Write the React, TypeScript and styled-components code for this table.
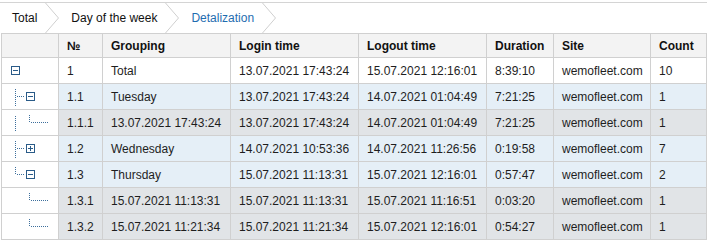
import React from "react";
import styled, { createGlobalStyle } from "styled-components";

const GlobalStyle = createGlobalStyle`
  body {
    margin: 0;
    background: #fff;
    font-family: "Liberation Sans", Arial, sans-serif;
    font-size: 12px;
    color: #1e1e1e;
  }
`;

const Page = styled.div`
  width: 707px;
  padding-top: 2px;
`;

const Breadcrumbs = styled.div`
  display: flex;
  align-items: stretch;
  height: 30px;
  border-top: 1px solid #d4d4d4;
  background: #fff;
`;

const Crumb = styled.div<{ $active?: boolean; $first?: boolean }>`
  display: flex;
  align-items: center;
  padding-left: ${(p) => (p.$first ? 12 : 12)}px;
  color: ${(p) => (p.$active ? "#1f6db0" : "#111")};
  white-space: nowrap;
`;

const CrumbLabel = styled.span`
  padding-right: 8px;
  padding-bottom: 1px;
`;

const Chevron = styled.svg`
  display: block;
  flex: none;
`;

const TableWrap = styled.div`
  padding-left: 1px;
`;

const Grid = styled.table`
  width: 705px;
  table-layout: fixed;
  border-collapse: collapse;
`;

const HeadCell = styled.th`
  height: 23px;
  padding: 0 0 0 8px;
  text-align: left;
  font-weight: bold;
  color: #111;
  background: #f3f3f3;
  border: 1px solid #d0d0d0;
  white-space: nowrap;
  overflow: hidden;
`;

type Tone = "plain" | "blue" | "gray";

const toneColor: Record<Tone, string> = {
  plain: "#fff",
  blue: "#e5eff7",
  gray: "#e1e4e7",
};

const Cell = styled.td<{ $tone: Tone }>`
  height: 24.67px;
  padding: 0 0 0 8px;
  background: ${(p) => toneColor[p.$tone]};
  border: 1px solid #d0d0d0;
  white-space: nowrap;
  overflow: hidden;
`;

const TreeCell = styled.td`
  height: 24.67px;
  padding: 0;
  background: #fff;
  border: 1px solid #d0d0d0;
`;

const TreeSvg = styled.svg`
  display: block;
`;

const LINE = "#3d6f9c";
const BOX = "#2a5b88";

type TreeInfo = {
  level: 0 | 1 | 2;
  toggle?: "minus" | "plus";
  last?: boolean;
  outerContinues?: boolean;
};

const Dots = ({ x1, y1, x2, y2 }: { x1: number; y1: number; x2: number; y2: number }) => (
  <line x1={x1} y1={y1} x2={x2} y2={y2} stroke={LINE} strokeWidth={1} strokeDasharray="1 1" />
);

const Toggle = ({ x, kind }: { x: number; kind: "minus" | "plus" }) => (
  <g>
    <rect x={x + 0.5} y={8.5} width={8} height={8} fill="#fff" stroke={BOX} strokeWidth={1} />
    <line x1={x + 2} y1={12.5} x2={x + 7} y2={12.5} stroke={BOX} strokeWidth={1} />
    {kind === "plus" && <line x1={x + 4.5} y1={10} x2={x + 4.5} y2={15} stroke={BOX} strokeWidth={1} />}
  </g>
);

const TreeGuide = ({ info }: { info: TreeInfo }) => {
  const { level, toggle, last, outerContinues } = info;
  return (
    <TreeSvg width={55} height={25} viewBox="0 0 55 25">
      {level === 0 && toggle && <Toggle x={9} kind={toggle} />}
      {level === 1 && (
        <>
          <Dots x1={13.5} y1={5} x2={13.5} y2={last ? 12 : 22} />
          <Dots x1={15} y1={12.5} x2={23} y2={12.5} />
          {toggle && <Toggle x={24} kind={toggle} />}
        </>
      )}
      {level === 2 && (
        <>
          {outerContinues && <Dots x1={13.5} y1={6} x2={13.5} y2={22} />}
          <Dots x1={27.5} y1={5} x2={27.5} y2={12} />
          <Dots x1={29} y1={12.5} x2={47} y2={12.5} />
        </>
      )}
    </TreeSvg>
  );
};

type Row = {
  tree: TreeInfo;
  tone: Tone;
  no: string;
  grouping: string;
  login: string;
  logout: string;
  duration: string;
  site: string;
  count: string;
};

const rows: Row[] = [
  { tree: { level: 0, toggle: "minus" }, tone: "plain", no: "1", grouping: "Total", login: "13.07.2021 17:43:24", logout: "15.07.2021 12:16:01", duration: "8:39:10", site: "wemofleet.com", count: "10" },
  { tree: { level: 1, toggle: "minus" }, tone: "blue", no: "1.1", grouping: "Tuesday", login: "13.07.2021 17:43:24", logout: "14.07.2021 01:04:49", duration: "7:21:25", site: "wemofleet.com", count: "1" },
  { tree: { level: 2, last: true, outerContinues: true }, tone: "gray", no: "1.1.1", grouping: "13.07.2021 17:43:24", login: "13.07.2021 17:43:24", logout: "14.07.2021 01:04:49", duration: "7:21:25", site: "wemofleet.com", count: "1" },
  { tree: { level: 1, toggle: "plus" }, tone: "blue", no: "1.2", grouping: "Wednesday", login: "14.07.2021 10:53:36", logout: "14.07.2021 11:26:56", duration: "0:19:58", site: "wemofleet.com", count: "7" },
  { tree: { level: 1, toggle: "minus", last: true }, tone: "blue", no: "1.3", grouping: "Thursday", login: "15.07.2021 11:13:31", logout: "15.07.2021 12:16:01", duration: "0:57:47", site: "wemofleet.com", count: "2" },
  { tree: { level: 2 }, tone: "gray", no: "1.3.1", grouping: "15.07.2021 11:13:31", login: "15.07.2021 11:13:31", logout: "15.07.2021 11:16:51", duration: "0:03:20", site: "wemofleet.com", count: "1" },
  { tree: { level: 2, last: true }, tone: "gray", no: "1.3.2", grouping: "15.07.2021 11:21:34", login: "15.07.2021 11:21:34", logout: "15.07.2021 12:16:01", duration: "0:54:27", site: "wemofleet.com", count: "1" },
];

const columns = [
  { title: "", width: 57 },
  { title: "№", width: 44 },
  { title: "Grouping", width: 128 },
  { title: "Login time", width: 128 },
  { title: "Logout time", width: 128 },
  { title: "Duration", width: 67 },
  { title: "Site", width: 97 },
  { title: "Count", width: 56 },
];

const crumbs = ["Total", "Day of the week", "Detalization"];

const ChevronIcon = () => (
  <Chevron width={14} height={30} viewBox="0 0 14 30">
    <polyline points="0.5,0 13.5,15 0.5,30" fill="none" stroke="#cfcfcf" strokeWidth={1} />
  </Chevron>
);

export default function App() {
  return (
    <Page>
      <GlobalStyle />
      <Breadcrumbs>
        {crumbs.map((c, i) => (
          <Crumb key={c} $first={i === 0} $active={i === crumbs.length - 1}>
            <CrumbLabel>{c}</CrumbLabel>
            <ChevronIcon />
          </Crumb>
        ))}
      </Breadcrumbs>
      <TableWrap>
        <Grid>
          <colgroup>
            {columns.map((c, i) => (
              <col key={i} style={{ width: c.width }} />
            ))}
          </colgroup>
          <thead>
            <tr>
              {columns.map((c, i) => (
                <HeadCell key={i}>{c.title}</HeadCell>
              ))}
            </tr>
          </thead>
          <tbody>
            {rows.map((r) => (
              <tr key={r.no}>
                <TreeCell>
                  <TreeGuide info={r.tree} />
                </TreeCell>
                <Cell $tone={r.tone}>{r.no}</Cell>
                <Cell $tone={r.tone}>{r.grouping}</Cell>
                <Cell $tone={r.tone}>{r.login}</Cell>
                <Cell $tone={r.tone}>{r.logout}</Cell>
                <Cell $tone={r.tone}>{r.duration}</Cell>
                <Cell $tone={r.tone}>{r.site}</Cell>
                <Cell $tone={r.tone}>{r.count}</Cell>
              </tr>
            ))}
          </tbody>
        </Grid>
      </TableWrap>
    </Page>
  );
}
